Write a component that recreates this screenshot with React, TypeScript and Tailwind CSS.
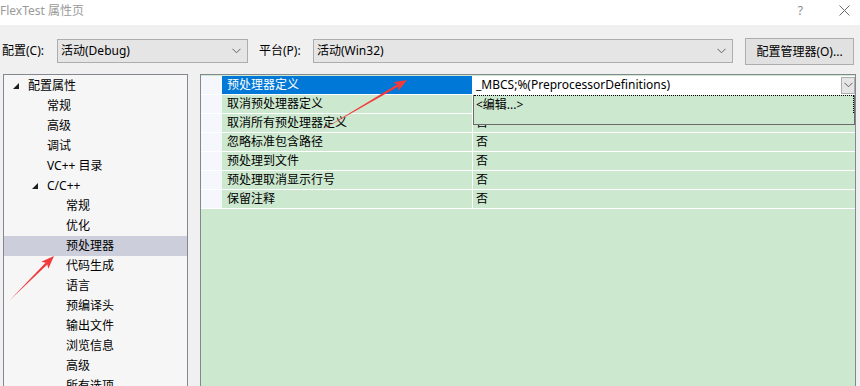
import React from "react";

const FONT = { fontFamily: '"Noto Sans", "Noto Sans CJK SC", sans-serif' };

type TreeItem = { label: string; level: 0 | 1 | 2; expander?: boolean; selected?: boolean };

const tree: TreeItem[] = [
  { label: "配置属性", level: 0, expander: true },
  { label: "常规", level: 1 },
  { label: "高级", level: 1 },
  { label: "调试", level: 1 },
  { label: "VC++ 目录", level: 1 },
  { label: "C/C++", level: 1, expander: true },
  { label: "常规", level: 2 },
  { label: "优化", level: 2 },
  { label: "预处理器", level: 2, selected: true },
  { label: "代码生成", level: 2 },
  { label: "语言", level: 2 },
  { label: "预编译头", level: 2 },
  { label: "输出文件", level: 2 },
  { label: "浏览信息", level: 2 },
  { label: "高级", level: 2 },
  { label: "所有选项", level: 2 },
];

const levelPad: Record<number, string> = { 0: "pl-[9px]", 1: "pl-[28px]", 2: "pl-[47px]" };

const rows: { name: string; value: string }[] = [
  { name: "预处理器定义", value: "_MBCS;%(PreprocessorDefinitions)" },
  { name: "取消预处理器定义", value: "" },
  { name: "取消所有预处理器定义", value: "否" },
  { name: "忽略标准包含路径", value: "否" },
  { name: "预处理到文件", value: "否" },
  { name: "预处理取消显示行号", value: "否" },
  { name: "保留注释", value: "否" },
];

function Chevron({ className = "" }: { className?: string }) {
  return (
    <svg width="9" height="6" viewBox="0 0 9 6" className={className}>
      <polyline points="0.5,0.8 4.5,4.8 8.5,0.8" fill="none" stroke="#606060" strokeWidth="1" />
    </svg>
  );
}

function Expander() {
  return (
    <svg width="6" height="6" viewBox="0 0 6 6">
      <polygon points="6,0 6,6 0,6" fill="#1e1e1e" />
    </svg>
  );
}

function Arrow({ x1, y1, x2, y2 }: { x1: number; y1: number; x2: number; y2: number }) {
  const dx = x2 - x1;
  const dy = y2 - y1;
  const len = Math.sqrt(dx * dx + dy * dy);
  const ux = dx / len;
  const uy = dy / len;
  const hl = 13;
  const hw = 5;
  const bx = x2 - ux * hl;
  const by = y2 - uy * hl;
  const px = -uy;
  const py = ux;
  const lx = x2 - ux * (hl - 3);
  const ly = y2 - uy * (hl - 3);
  return (
    <g>
      <polygon
        points={`${x1},${y1} ${lx + px * 1.3},${ly + py * 1.3} ${lx - px * 1.3},${ly - py * 1.3}`}
        fill="#f23a3a"
      />
      <polygon
        points={`${x2},${y2} ${bx + px * hw},${by + py * hw} ${lx},${ly} ${bx - px * hw},${by - py * hw}`}
        fill="#f23a3a"
      />
    </g>
  );
}

export default function App() {
  return (
    <div className="relative w-[860px] h-[386px] overflow-hidden bg-[#f0f0f0] text-[12px] text-black flex flex-col" style={FONT}>
      {/* Title bar */}
      <div className="h-[25px] bg-white flex items-center shrink-0 relative">
        <span className="text-[#9a9a9a] leading-none -mt-[3px]">FlexTest 属性页</span>
        <div className="ml-auto flex items-center h-full -mt-[4px]">
          <span className="text-[#8a8a8a] text-[12px] mr-[36px]">?</span>
          <svg width="11" height="11" viewBox="0 0 11 11" className="mr-[10px]">
            <line x1="0.5" y1="0.5" x2="10.5" y2="10.5" stroke="#6a6a6a" strokeWidth="1" />
            <line x1="10.5" y1="0.5" x2="0.5" y2="10.5" stroke="#6a6a6a" strokeWidth="1" />
          </svg>
        </div>
      </div>

      {/* Toolbar */}
      <div className="h-[49px] shrink-0 flex items-start pt-[14px] pl-[2px]">
        <span className="w-[55px] h-[24px] flex items-center">配置(C):</span>
        <div className="w-[191px] h-[24px] border border-[#adadad] bg-[#e5e5e5] flex items-center pl-[3px] pr-[6px]">
          <span>活动(Debug)</span>
          <Chevron className="ml-auto" />
        </div>
        <span className="ml-[11px] w-[54px] h-[24px] flex items-center">平台(P):</span>
        <div className="w-[420px] h-[24px] border border-[#adadad] bg-[#e5e5e5] flex items-center pl-[3px] pr-[6px]">
          <span>活动(Win32)</span>
          <Chevron className="ml-auto" />
        </div>
        <div className="ml-[12px] -mt-[1px] w-[109px] h-[27px] border border-[#adadad] bg-[#e1e1e1] flex items-center justify-center">
          配置管理器(O)...
        </div>
      </div>

      {/* Main */}
      <div className="flex-1 flex min-h-0">
        {/* Tree */}
        <div className="ml-[3px] w-[185px] border border-[#828790] border-b-0 bg-[#f6f6f6] overflow-hidden pt-[1px]">
          {tree.map((t, i) => (
            <div
              key={i}
              className={`h-[20px] flex items-center ${levelPad[t.level]} ${t.selected ? "bg-[#cccedb]" : ""}`}
            >
              <span className="w-[15px] flex items-center">{t.expander ? <Expander /> : null}</span>
              <span className="whitespace-nowrap">{t.label}</span>
            </div>
          ))}
        </div>

        {/* Property grid */}
        <div className="ml-[12px] w-[656px] border border-[#828790] border-b-0 bg-[#cce8cf] relative">
          <div className="pt-[1px] relative">
            {rows.map((r, i) => (
              <div key={i} className="flex h-[19px] border-b border-white">
                <div className="w-[21px] bg-[#f5f7fc]" />
                <div
                  className={`w-[251px] border-r border-white pl-[5px] flex items-center whitespace-nowrap ${
                    i === 0 ? "bg-[#0078d7] text-white" : ""
                  }`}
                >
                  {r.name}
                </div>
                {i === 0 ? (
                  <div className="flex-1 bg-white flex items-center pl-[3px]">
                    <span className="whitespace-nowrap">{r.value}</span>
                    <div className="ml-auto w-[14px] h-[17px] border border-[#adadad] bg-[#e5e5e5] flex items-center justify-center">
                      <Chevron />
                    </div>
                  </div>
                ) : (
                  <div className="flex-1 flex items-center pl-[3px]">{r.value}</div>
                )}
              </div>
            ))}

            {/* Dropdown popup */}
            <div className="absolute left-[272px] top-[20px] w-[382px] h-[30px] bg-[#cce8cf] border border-t-0 border-[#6b6b6b]">
              <div className="h-[18px] border-t border-r border-dotted border-black flex items-center pl-[2px]">
                &lt;编辑...&gt;
              </div>
            </div>
          </div>
        </div>
      </div>

      {/* Annotation arrows */}
      <svg className="absolute left-0 top-0 pointer-events-none" width="860" height="386">
        <Arrow x1={10} y1={300} x2={54} y2={256} />
        <Arrow x1={320} y1={131} x2={407} y2={80} />
      </svg>
    </div>
  );
}
